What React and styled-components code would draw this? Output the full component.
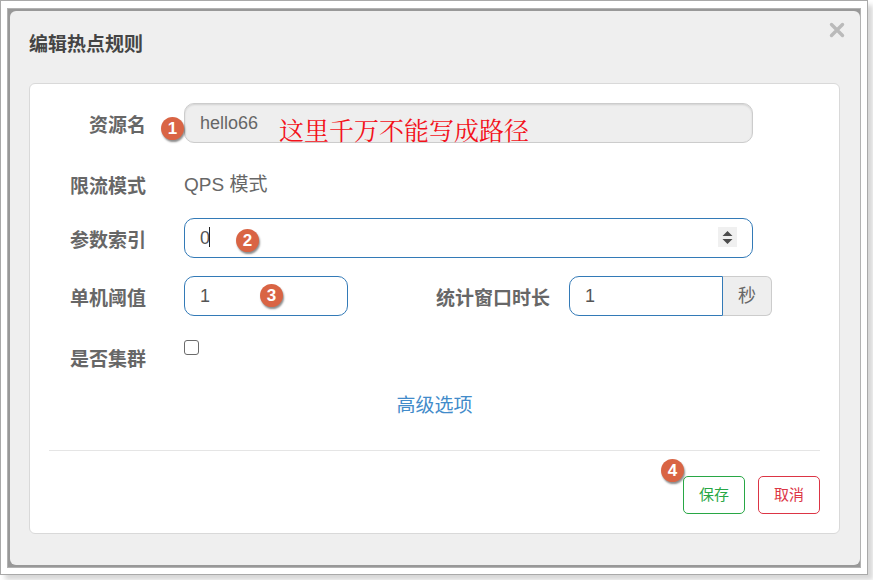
import React from "react";
import styled, { createGlobalStyle } from "styled-components";

const GlobalStyle = createGlobalStyle`
  *, *::before, *::after { box-sizing: border-box; }
  body {
    margin: 0;
    background: #fff;
    color: #676767;
    font-family: "Liberation Sans", "Noto Sans CJK SC", sans-serif;
    font-size: 18px;
    line-height: 24px;
  }
  button, input { font: inherit; }
`;

const Frame = styled.div`
  margin: 0 5px 5px 0;
  padding: 6px;
  padding-top: 7px;
  border: 1px solid #a9a9a9;
  background: #fff;
  box-shadow: 5px 5px 5px rgba(0, 0, 0, 0.16);
`;

const Backdrop = styled.div`
  padding: 2px 0 2px 2px;
  border: 1px solid #b2b2b2;
  background: #989898;
`;

const Dialog = styled.main`
  padding: 0 20px 31px 19px;
  border-radius: 6px;
  background: #efefef;
`;

const Header = styled.header`
  display: flex;
  justify-content: space-between;
  align-items: flex-start;
  height: 72px;
  padding-top: 7px;
`;

const Title = styled.h1`
  margin: 15px 0 0;
  color: #444;
  font-size: 19px;
  line-height: 24px;
`;

const CloseButton = styled.button`
  display: flex;
  margin-right: -9px;
  padding: 4px;
  border: 0;
  background: none;
  cursor: pointer;
`;

const Panel = styled.form`
  padding: 19px;
  border: 1px solid #d9d9d9;
  border-radius: 6px;
  background: #fff;
`;

const Fields = styled.div`
  display: grid;
  gap: 18px;
`;

const Row = styled.div`
  display: grid;
  grid-template-columns: 97px minmax(0, 1fr);
  column-gap: 38px;
  height: ${(p) => (p.$plain ? "39px" : "40px")};
  padding-top: ${(p) => (p.$plain ? "3px" : 0)};
`;

const Label = styled.label`
  padding-top: 11px;
  font-size: 19px;
  font-weight: bold;
  text-align: right;
  white-space: nowrap;
`;

const Value = styled.span`
  padding-top: 9px;
  font-size: 19px;
`;

const Control = styled.div`
  position: relative;
  height: 40px;
  margin-right: ${(p) => (p.$wide ? "67px" : 0)};
`;

const Input = styled.input`
  display: block;
  width: 100%;
  height: 40px;
  padding: 0 15px;
  border: 1px solid #337ab7;
  border-radius: ${(p) => (p.$joined ? "10px 0 0 10px" : "10px")};
  outline: 0;
  background: #fff;
  color: #555;
  appearance: textfield;

  &::-webkit-inner-spin-button { display: none; }
  &:disabled {
    border-color: #ccc;
    background: #eee;
    box-shadow: inset 0 1px 2px rgba(0, 0, 0, 0.12);
    -webkit-text-fill-color: #666;
  }
`;

const Pair = styled.div`
  display: grid;
  grid-template-columns: minmax(0, 164fr) 183px minmax(0, 203fr);
  column-gap: 19px;
  margin-right: 48px;
`;

const Group = styled.div`
  display: grid;
  grid-template-columns: minmax(0, 1fr) 49px;
`;

const Unit = styled.span`
  display: grid;
  place-items: center;
  height: 40px;
  border: 1px solid #ccc;
  border-left: 0;
  border-radius: 0 6px 6px 0;
  background: #eee;
`;

const Checkbox = styled.input`
  width: 15px;
  height: 15px;
  margin: 3px 0 0;
  border: 1px solid #6b6b6b;
  border-radius: 3px;
  background: #fff;
  appearance: none;

  &:checked { background: #337ab7; }
`;

const Annotation = styled.span`
  position: absolute;
  top: 10px;
  left: 95px;
  color: #f3121b;
  font-family: "Noto Serif CJK SC", "Noto Sans CJK SC", serif;
  font-size: 25px;
  font-weight: 400;
  line-height: 32px;
  white-space: nowrap;
`;

const Badge = styled.span`
  position: absolute;
  top: ${(p) => p.$top}px;
  left: ${(p) => p.$left}px;
  width: 23px;
  height: 23px;
  border-radius: 50%;
  background: #d96444;
  box-shadow: 1px 2px 2px rgba(0, 0, 0, 0.45);
  color: #fff;
  font-size: 17px;
  font-weight: bold;
  line-height: 23px;
  text-align: center;
`;

const Caret = styled.span`
  position: absolute;
  top: 9px;
  left: 25px;
  width: 1px;
  height: 20px;
  background: #222;
`;

const Spinner = styled.svg`
  position: absolute;
  top: 9px;
  right: 16px;
  width: 19px;
  height: 20px;
`;

const AdvancedLine = styled.div`
  display: flex;
  justify-content: center;
  padding-top: 21px;
`;

const AdvancedLink = styled.a`
  color: #428bca;
  font-size: 19px;
  text-decoration: none;
`;

const Actions = styled.footer`
  display: flex;
  justify-content: flex-end;
  gap: 13px;
  margin-top: 32px;
  padding-top: 25px;
  border-top: 1px solid #e5e5e5;
`;

const ActionSlot = styled.div`
  position: relative;
`;

const ActionButton = styled.button`
  width: 62px;
  height: 38px;
  padding: 0;
  border: 1px solid ${(p) => p.$color};
  border-radius: 5px;
  background: #fff;
  color: ${(p) => p.$color};
  font-size: 15px;
  cursor: pointer;
`;

export default function App() {
  return (
    <>
      <GlobalStyle />
      <Frame>
        <Backdrop>
          <Dialog>
            <Header>
              <Title>编辑热点规则</Title>
              <CloseButton type="button" aria-label="关闭">
                <svg width="16" height="16" viewBox="0 0 16 16">
                  <path d="M2.5 2.5l11 11M13.5 2.5l-11 11" stroke="#bababa" strokeWidth="3.4" strokeLinecap="round" />
                </svg>
              </CloseButton>
            </Header>
            <Panel onSubmit={(e) => e.preventDefault()}>
              <Fields>
                <Row>
                  <Label htmlFor="resource">资源名</Label>
                  <Control $wide>
                    <Input id="resource" type="text" defaultValue="hello66" disabled />
                    <Badge $top={14} $left={-23}>1</Badge>
                    <Annotation>这里千万不能写成路径</Annotation>
                  </Control>
                </Row>
                <Row $plain>
                  <Label as="span">限流模式</Label>
                  <Value>QPS 模式</Value>
                </Row>
                <Row>
                  <Label htmlFor="index">参数索引</Label>
                  <Control $wide>
                    <Input id="index" type="number" defaultValue="0" />
                    <Caret />
                    <Badge $top={11} $left={52}>2</Badge>
                    <Spinner viewBox="0 0 19 20" aria-hidden="true">
                      <path d="M0 0h19v20H0z" fill="#f0f0f0" />
                      <path d="M4.5 9l5-5 5 5zM4.5 12h10l-5 5z" fill="#4d4d4d" />
                    </Spinner>
                  </Control>
                </Row>
                <Row>
                  <Label htmlFor="threshold">单机阈值</Label>
                  <Pair>
                    <Control>
                      <Input id="threshold" type="number" defaultValue="1" />
                      <Badge $top={8} $left={76}>3</Badge>
                    </Control>
                    <Label htmlFor="duration">统计窗口时长</Label>
                    <Group>
                      <Input id="duration" type="number" defaultValue="1" $joined />
                      <Unit>秒</Unit>
                    </Group>
                  </Pair>
                </Row>
                <Row $plain>
                  <Label htmlFor="cluster">是否集群</Label>
                  <Checkbox id="cluster" type="checkbox" />
                </Row>
              </Fields>
              <AdvancedLine>
                <AdvancedLink href="#advanced">高级选项</AdvancedLink>
              </AdvancedLine>
              <Actions>
                <ActionSlot>
                  <ActionButton type="submit" $color="#28a745">保存</ActionButton>
                  <Badge $top={-17} $left={-22}>4</Badge>
                </ActionSlot>
                <ActionButton type="button" $color="#dc3545">取消</ActionButton>
              </Actions>
            </Panel>
          </Dialog>
        </Backdrop>
      </Frame>
    </>
  );
}
